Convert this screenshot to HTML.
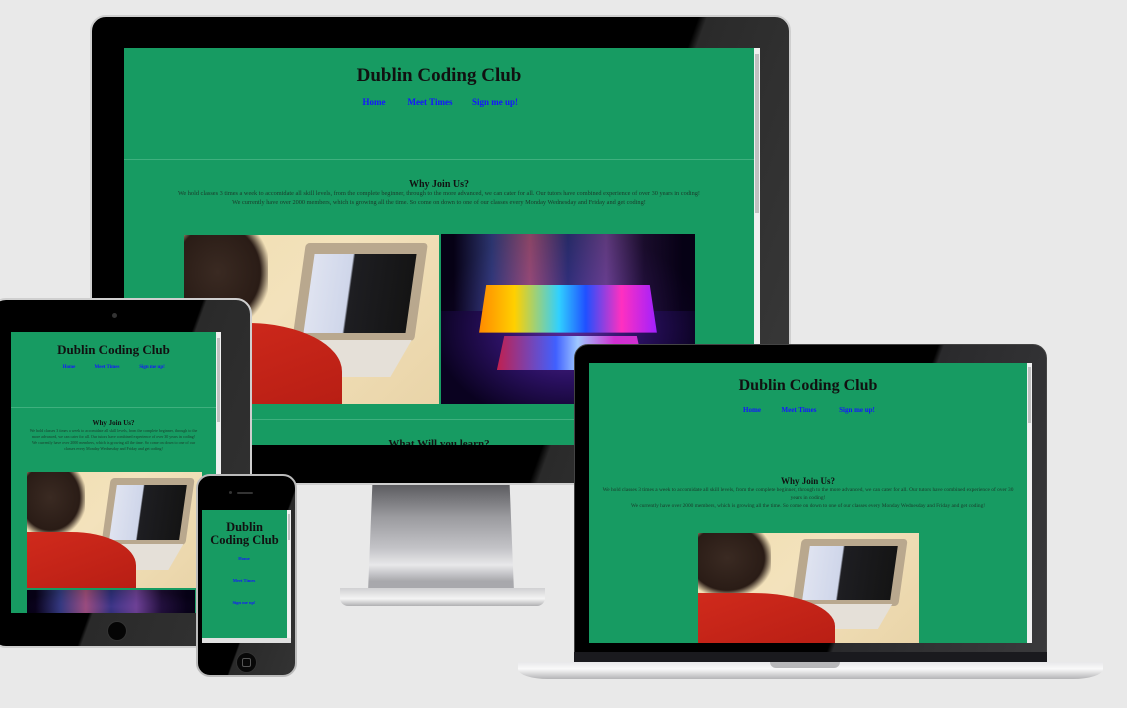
<!DOCTYPE html>
<html><head><meta charset="utf-8">
<style>
*{margin:0;padding:0;box-sizing:border-box}
body{width:1127px;height:708px;background:#e9e9e9;position:relative;overflow:hidden;font-family:"Liberation Serif",serif}
.abs{position:absolute}
.g{background:#179b62;overflow:hidden}
.t{position:absolute;left:0;right:0;text-align:center;color:#111;font-weight:bold;white-space:nowrap}
.n{position:absolute;color:#1515ff;font-weight:bold;white-space:nowrap;transform:translateX(-50%)}
.p{position:absolute;left:0;right:0;text-align:center;color:#1a3a2a;white-space:nowrap}
.hr{position:absolute;left:0;right:0;height:1px;background:#3fb07e}
.img1{position:absolute;overflow:hidden;background:linear-gradient(135deg,#f1deb0 0%,#f3e2bc 40%,#e9d4a8 100%)}
.img1 .hd{position:absolute;left:0;top:0;width:33%;height:55%;background:radial-gradient(ellipse at 40% 40%,#3a2a22 0%,#2a1c16 60%,rgba(0,0,0,0) 75%)}
.img1 .arm{position:absolute;left:0;bottom:0;width:62%;height:48%;background:linear-gradient(160deg,#d02a1c,#b81e14);border-radius:0 60% 0 0}
.img1 .lap{position:absolute;left:45%;top:5%;width:48%;height:58%;background:#b9a88e;transform:skewX(-8deg);border-radius:4px}
.img1 .scr{position:absolute;left:49%;top:11%;width:40%;height:47%;background:linear-gradient(90deg,#dfe3f0 0%,#cfd6ea 38%,#1e1e22 40%,#141414 100%);transform:skewX(-8deg)}
.img1 .kb{position:absolute;left:40%;top:62%;width:45%;height:22%;background:#e5e0d8;transform:skewX(-30deg)}
.img2{position:absolute;overflow:hidden;background:radial-gradient(ellipse at 50% 55%,#5a2a9a 0%,#2a1060 40%,#0a0220 75%)}
.img2 .rays{position:absolute;left:0;top:0;right:0;height:45%;background:linear-gradient(90deg,#050010 5%,#3a4a90 20%,#c06080 35%,#303a80 50%,#8050a0 65%,#201030 80%,#050010 95%);opacity:.7}
.img2 .ky{position:absolute;left:15%;top:30%;width:70%;height:28%;background:linear-gradient(90deg,#ff8a00,#ffd000 20%,#30d0ff 45%,#2050ff 60%,#ff30c0 80%,#a020ff);clip-path:polygon(4% 0,96% 0,100% 100%,0 100%)}
.img2 .bs{position:absolute;left:22%;top:60%;width:58%;height:20%;background:linear-gradient(90deg,#c02050,#4060ff 40%,#9fc8ff 55%,#d030d0 80%);clip-path:polygon(5% 0,95% 0,100% 100%,0 100%)}
.sb{position:absolute;top:0;bottom:0;width:6px;background:#f0f0f0}
.sb i{position:absolute;left:1px;right:1px;top:6px;height:40%;background:#c1c1c1}
</style></head><body>

<div class="abs" style="left:368px;top:484px;width:146px;height:108px;background:linear-gradient(180deg,#5a5a5e 0%,#9a9a9e 30%,#c4c4c8 60%,#e8e8ea 75%,#a8a8ac 90%);clip-path:polygon(3% 0,97% 0,100% 100%,0 100%)"></div>
<div class="abs" style="left:340px;top:588px;width:205px;height:18px;background:linear-gradient(180deg,#d0d0d2,#f4f4f4 60%,#b0b0b2);border-radius:0 0 8px 8px"></div>
<div class="abs" style="left:90px;top:15px;width:701px;height:470px;background:linear-gradient(110deg,#000 70%,#2a2a2a 71%,#3a3a3a 100%);border-radius:16px;border:2px solid #cfcfcf"></div>
<div class="abs g" style="left:124px;top:48px;width:636px;height:397px">
 <div class="sb" style="right:0"><i></i></div>
 <div class="t" style="top:17px;font-size:19px;right:6px">Dublin Coding Club</div>
 <div class="n" style="left:250px;top:49px;font-size:9px">Home</div>
 <div class="n" style="left:306px;top:49px;font-size:9px">Meet Times</div>
 <div class="n" style="left:371px;top:49px;font-size:9px">Sign me up!</div>
 <div class="hr" style="top:111px;right:6px"></div>
 <div class="t" style="top:131px;font-size:10px;right:6px">Why Join Us?</div>
 <div class="p" style="top:142px;font-size:6.3px;right:6px">We hold classes 3 times a week to accomidate all skill levels, from the complete beginner, through to the more advanced, we can cater for all. Our tutors have combined experience of over 30 years in coding!</div>
 <div class="p" style="top:151px;font-size:6.3px;right:6px">We currently have over 2000 members, which is growing all the time. So come on down to one of our classes every Monday Wednesday and Friday and get coding!</div>
 <div class="img1" style="left:60px;top:187px;width:255px;height:169px"><div class="hd"></div><div class="lap"></div><div class="scr"></div><div class="kb"></div><div class="arm"></div></div>
 <div class="img2" style="left:317px;top:186px;width:254px;height:170px"><div class="rays"></div><div class="ky"></div><div class="bs"></div></div>
 <div class="hr" style="top:371px;right:6px"></div>
 <div class="t" style="top:390px;font-size:11px;right:6px">What Will you learn?</div>
</div>

<div class="abs" style="left:-10px;top:298px;width:262px;height:350px;background:linear-gradient(110deg,#000 55%,#2a2a2a 56%,#333 100%);border-radius:16px;border:2px solid #cfcfcf"></div>
<div class="abs" style="left:112px;top:313px;width:5px;height:5px;border-radius:50%;background:#333"></div>
<div class="abs" style="left:107px;top:621px;width:20px;height:20px;border-radius:50%;border:1px solid #333;background:#050505"></div>
<div class="abs g" style="left:11px;top:332px;width:210px;height:281px">
 <div class="sb" style="right:0;width:5px"><i style="height:30%"></i></div>
 <div class="t" style="top:10px;font-size:13px;right:5px">Dublin Coding Club</div>
 <div class="n" style="left:58px;top:33px;font-size:5px">Home</div>
 <div class="n" style="left:96px;top:33px;font-size:5px">Meet Times</div>
 <div class="n" style="left:141px;top:33px;font-size:5px">Sign me up!</div>
 <div class="hr" style="top:75px;right:5px"></div>
 <div class="t" style="top:87px;font-size:7px;right:5px">Why Join Us?</div>
 <div class="p" style="top:96px;font-size:4px;right:5px;white-space:normal;padding:0 18px;line-height:6px">We hold classes 3 times a week to accomidate all skill levels, from the complete beginner, through to the more advanced, we can cater for all. Our tutors have combined experience of over 30 years in coding! We currently have over 2000 members, which is growing all the time. So come on down to one of our classes every Monday Wednesday and Friday and get coding!</div>
 <div class="img1" style="left:16px;top:140px;width:175px;height:116px"><div class="hd"></div><div class="lap"></div><div class="scr"></div><div class="kb"></div><div class="arm"></div></div>
 <div class="img2" style="left:16px;top:258px;width:168px;height:30px"><div class="rays" style="height:100%"></div></div>
</div>

<div class="abs" style="left:196px;top:474px;width:101px;height:203px;background:linear-gradient(110deg,#000 60%,#2a2a2a 61%,#333);border-radius:14px;border:2px solid #bbb"></div>
<div class="abs" style="left:229px;top:491px;width:3px;height:3px;border-radius:50%;background:#333"></div>
<div class="abs" style="left:237px;top:492px;width:16px;height:2px;border-radius:1px;background:#333"></div>
<div class="abs" style="left:236px;top:652px;width:21px;height:21px;border-radius:50%;border:1px solid #333;background:#080808"></div>
<div class="abs" style="left:242px;top:658px;width:9px;height:9px;border-radius:2px;border:1px solid #555"></div>
<div class="abs g" style="left:202px;top:510px;width:89px;height:133px">
 <div class="sb" style="right:0;width:4px;bottom:5px"><i style="height:20%;top:4px"></i></div>
 <div class="abs" style="left:0;right:0;bottom:0;height:5px;background:#e0e0e0"></div>
 <div class="t" style="top:11px;font-size:12.5px;line-height:13px;right:4px">Dublin<br>Coding Club</div>
 <div class="n" style="left:42px;top:46px;font-size:4.5px">Home</div>
 <div class="n" style="left:42px;top:68px;font-size:4.5px">Meet Times</div>
 <div class="n" style="left:42px;top:90px;font-size:4.5px">Sign me up!</div>
</div>

<div class="abs" style="left:518px;top:662px;width:585px;height:17px;background:linear-gradient(180deg,#e8e8ea,#fafafa 40%,#b4b4b6);border-radius:0 0 30px 30px / 0 0 10px 10px"></div>
<div class="abs" style="left:770px;top:662px;width:70px;height:6px;background:#b8b8ba;border-radius:0 0 6px 6px"></div>
<div class="abs" style="left:574px;top:344px;width:473px;height:318px;background:linear-gradient(110deg,#000 62%,#2a2a2c 63%,#3a3a3c);border-radius:14px 14px 0 0;border:1px solid #444"></div>
<div class="abs" style="left:574px;top:652px;width:473px;height:10px;background:#1a1a1e"></div>
<div class="abs g" style="left:589px;top:363px;width:443px;height:280px">
 <div class="sb" style="right:0;width:5px"><i style="height:20%;top:4px"></i></div>
 <div class="t" style="top:14px;font-size:16px;right:5px">Dublin Coding Club</div>
 <div class="n" style="left:163px;top:43px;font-size:7px">Home</div>
 <div class="n" style="left:210px;top:43px;font-size:7px">Meet Times</div>
 <div class="n" style="left:268px;top:43px;font-size:7px">Sign me up!</div>
 <div class="t" style="top:113px;font-size:9px;right:5px">Why Join Us?</div>
 <div class="p" style="top:123px;font-size:5.4px;right:5px;white-space:normal;padding:0 12px;line-height:8px">We hold classes 3 times a week to accomidate all skill levels, from the complete beginner, through to the more advanced, we can cater for all. Our tutors have combined experience of over 30 years in coding!<br>We currently have over 2000 members, which is growing all the time. So come on down to one of our classes every Monday Wednesday and Friday and get coding!</div>
 <div class="img1" style="left:109px;top:170px;width:221px;height:115px"><div class="hd"></div><div class="lap"></div><div class="scr"></div><div class="kb"></div><div class="arm"></div></div>
</div>
</body></html>
